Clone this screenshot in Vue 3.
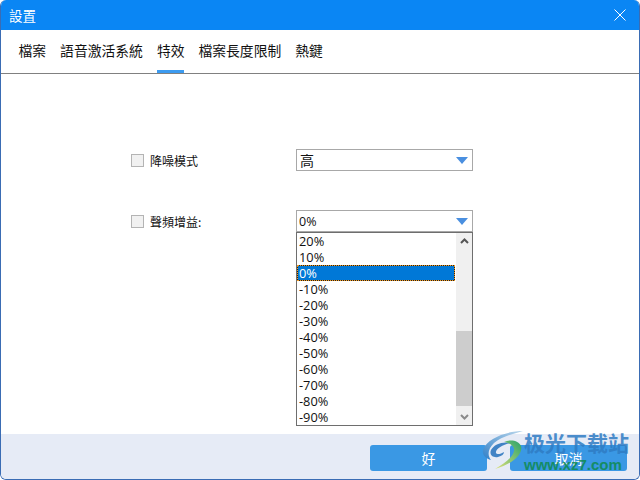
<script setup>
const tabs = ['檔案', '語音激活系統', '特效', '檔案長度限制', '熱鍵']
const options = ['20%', '10%', '0%', '-10%', '-20%', '-30%', '-40%', '-50%', '-60%', '-70%', '-80%', '-90%']
</script>

<template>
  <div class="win">
    <header class="title">
      <span>設置</span>
      <svg class="close" width="12" height="12" viewBox="0 0 12 12"><path d="M.5.5l11 11M11.500.5l-11 11" stroke="#fff" fill="none" /></svg>
    </header>
    <nav class="tabs">
      <span v-for="t in tabs" :key="t" class="tab" :class="{ on: t === '特效' }">{{ t }}</span>
    </nav>
    <main class="body">
      <div class="row first">
        <label class="check"><i class="box"></i>降噪模式</label>
        <div class="select big"><span>高</span><i class="arrow"></i></div>
      </div>
      <div class="row second">
        <label class="check"><i class="box"></i>聲頻增益:</label>
        <div class="wrap">
          <div class="select"><span>0%</span><i class="arrow"></i></div>
          <div class="list">
            <ul>
              <li v-for="o in options" :key="o" :class="{ sel: o === '0%' }">{{ o }}</li>
            </ul>
            <div class="bar">
              <svg class="chev" width="9" height="6" viewBox="0 0 9 6"><path d="M1 5l3.500-3.500L8 5" stroke="#555" stroke-width="2" fill="none" /></svg>
              <div class="track"><div class="thumb"></div></div>
              <svg class="chev" width="9" height="6" viewBox="0 0 9 6"><path d="M1 1l3.500 3.500L8 1" stroke="#8a8a8a" stroke-width="2" fill="none" /></svg>
            </div>
          </div>
        </div>
      </div>
    </main>
    <footer class="foot">
      <button class="btn">好</button>
      <button class="btn">取消</button>
    </footer>
    <div class="mark">
      <svg class="logo" width="42" height="40" viewBox="0 0 42 40">
        <defs>
          <linearGradient id="swoosh" x1="1" y1="0" x2="0" y2="1">
            <stop offset="0" stop-color="#bcd8ec" />
            <stop offset="1" stop-color="#2f7fc8" />
          </linearGradient>
          <linearGradient id="tail" x1="1" y1="0" x2="0" y2="1">
            <stop offset="0" stop-color="#2aa36a" />
            <stop offset="1" stop-color="#e2e27a" />
          </linearGradient>
        </defs>
        <path d="M41 1C25 1 5 8 1 20c-1 5 3 9 8 10-4-5-3-11 3-17C19 7 30 4 41 1z" fill="url(#swoosh)" />
        <path d="M29 13c-8-2-17 1-20 7-2 5 2 8 7 7 4-1 6-3 6-5-3 2-7 3-8 1-1-4 7-9 15-10z" fill="#2f78c0" opacity=".9" />
        <path d="M22 12c7-3 15-1 17 4 2 7-6 17-26 23 10-6 18-12 19-18 1-4-3-8-10-9z" fill="url(#tail)" />
      </svg>
      <div class="mark-text">
        <b>极光下载站</b>
        <em>www.xz7.com</em>
      </div>
    </div>
  </div>
</template>

<style>
html, body { margin: 0; background: #fff; }
</style>

<style scoped>
.win {
  position: relative;
  box-sizing: border-box;
  width: 640px;
  height: 480px;
  display: flex;
  flex-direction: column;
  border: 1px solid #3a6cb4;
  border-top: 0;
  border-radius: 6px;
  overflow: hidden;
  background: #fff;
  color: #111;
  font: 13px "Noto Sans CJK TC", "Noto Sans", sans-serif;
}
.title {
  height: 30px;
  flex: none;
  background: #0a86f4;
  color: #fff;
  font-size: 13.500px;
  display: flex;
  align-items: center;
  justify-content: space-between;
  padding: 0 13px 0 8px;
}
.close { display: block; }
.tabs {
  height: 44px;
  flex: none;
  box-sizing: border-box;
  display: flex;
  gap: 14px;
  padding-left: 17.500px;
  border-bottom: 1px solid #808080;
}
.tab {
  height: 43px;
  box-sizing: border-box;
  line-height: 41px;
  font-size: 13.800px;
  white-space: nowrap;
}
.tab.on { border-bottom: 3px solid #3c9bf0; }
.body {
  flex: 1;
  min-height: 0;
  padding: 0 0 0 130px;
}
.row { display: flex; align-items: center; }
.first { margin-top: 75px; }
.second { margin-top: 39px; }
.check {
  width: 165px;
  display: flex;
  align-items: center;
  gap: 6px;
  font-size: 12px;
}
.box {
  width: 11px;
  height: 11px;
  border: 1px solid #b4b4b4;
  background: #f1f1f1;
}
.wrap { position: relative; }
.select {
  width: 177px;
  height: 22px;
  box-sizing: border-box;
  border: 1px solid #a8a8a8;
  display: flex;
  align-items: center;
  justify-content: space-between;
  padding: 0 4px 0 2px;
  background: #fff;
  font: 12.500px "Open Sans", "Noto Sans CJK TC", sans-serif;
}
.select.big { font-size: 14px; font-family: "Noto Sans CJK TC", sans-serif; padding-left: 3px; }
.arrow {
  width: 0;
  height: 0;
  margin-top: 1px;
  border: 6px solid transparent;
  border-bottom: 0;
  border-top: 7px solid #4a8fe0;
}
.list {
  position: absolute;
  top: 22px;
  left: 0;
  width: 177px;
  height: 194px;
  box-sizing: border-box;
  border: 1px solid #6e6e6e;
  background: #fff;
  display: flex;
}
ul {
  flex: 1;
  margin: 0;
  padding: 0;
  list-style: none;
  font: 12.800px/15px "Open Sans", sans-serif;
}
li { height: 16px; box-sizing: border-box; padding: 1px 0 0 2px; }
li.sel {
  background: #0078d7;
  color: #fff;
  box-shadow: inset 0 0 0 1px #222;
  outline: 1px dotted #f39a1e;
  outline-offset: -1px;
}
.bar {
  width: 16px;
  margin-left: 1px;
  background: #f0f0f0;
  display: flex;
  flex-direction: column;
  align-items: center;
}
.chev { flex: none; margin: 5px 0; }
.track { flex: 1; width: 100%; padding-top: 82px; box-sizing: border-box; }
.thumb { height: 75px; background: #cdcdcd; }
.foot {
  height: 45px;
  flex: none;
  box-sizing: border-box;
  background: #e6ebf6;
  display: flex;
  gap: 23px;
  padding: 11px 12px 0 369px;
}
.btn {
  width: 117px;
  height: 26px;
  border: 0;
  border-radius: 3px;
  padding: 0;
  background: #3a98e4;
  color: #fff;
  font: 14px "Noto Sans CJK TC", sans-serif;
}
.mark {
  position: absolute;
  left: 481px;
  top: 430px;
  display: flex;
  pointer-events: none;
}
.mark-text {
  display: flex;
  flex-direction: column;
  margin-top: -1px;
  white-space: nowrap;
}
.mark-text b {
  font: 700 21px/26px "Noto Sans CJK SC", sans-serif;
  color: #2f7cc4;
  opacity: .85;
}
.mark-text em {
  font: 700 15px/18px "Liberation Sans", sans-serif;
  font-style: normal;
  color: #0e8a50;
  opacity: .85;
  margin-top: 1px;
}
</style>
